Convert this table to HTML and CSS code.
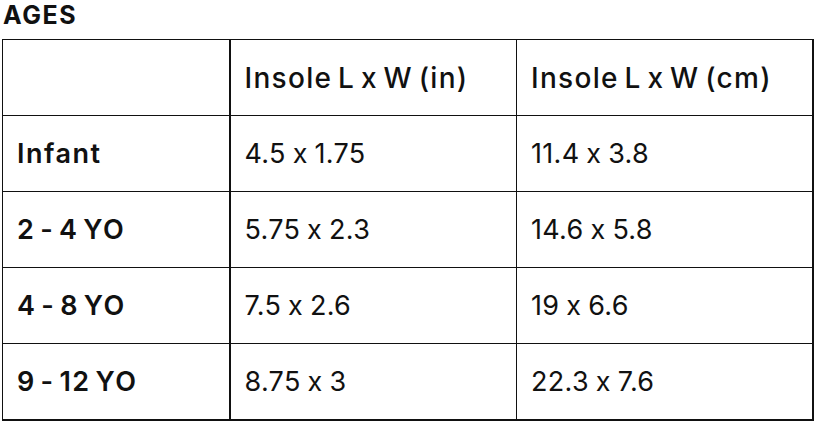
FILE: index.html
```html
<!DOCTYPE html>
<html lang="en">
<head>
<meta charset="utf-8">
<title>Ages</title>
<link rel="stylesheet" href="styles.css">
</head>
<body>
<div class="page">
  <h2 class="title">AGES</h2>
  <table class="size-table">
    <colgroup>
      <col class="c1"><col class="c2"><col class="c3">
    </colgroup>
    <thead>
      <tr><th></th><th>Insole L x W (in)</th><th>Insole L x W (cm)</th></tr>
    </thead>
    <tbody>
      <tr><th>Infant</th><td>4.5 x 1.75</td><td>11.4 x 3.8</td></tr>
      <tr><th>2 - 4 YO</th><td>5.75 x 2.3</td><td>14.6 x 5.8</td></tr>
      <tr><th>4 - 8 YO</th><td>7.5 x 2.6</td><td>19 x 6.6</td></tr>
      <tr class="last"><th>9 - 12 YO</th><td>8.75 x 3</td><td>22.3 x 7.6</td></tr>
    </tbody>
  </table>
</div>
</body>
</html>
```
FILE: styles.css
```css
html, body {
  margin: 0;
  padding: 0;
  background: #ffffff;
}
.page {
  padding: 0 3px 0 2px;
  font-family: Inter, "Liberation Sans", sans-serif;
  font-feature-settings: "calt" 0;
  color: #111111;
}
.title {
  margin: 0;
  padding: 0 0 0 1px;
  height: 39px;
  font-size: 25px;
  font-weight: 700;
  line-height: 30px;
  letter-spacing: 1.6px;
}
.size-table {
  width: 810px;
  border-collapse: collapse;
  table-layout: fixed;
}
.c1 { width: 227px; }
.c2 { width: 287px; }
.c3 { width: 296px; }
.size-table th,
.size-table td {
  height: 75px;
  padding: 0 0 0 14px;
  border-top: 1px solid #111;
  border-bottom: 1px solid #111;
  text-align: left;
  vertical-align: middle;
  font-size: 27px;
  white-space: nowrap;
}
.size-table th:first-child { border-left: 1px solid #111; border-right: 2px solid #111; }
.size-table td:last-child,
.size-table thead th:last-child { border-left: 1px solid #111; border-right: 2px solid #111; }
.size-table thead th { font-weight: 500; font-size: 28px; letter-spacing: 1.3px; word-spacing: -3px; }
.size-table tbody th { font-weight: 600; letter-spacing: 1.5px; word-spacing: -3.5px; }
.size-table td { font-weight: 400; letter-spacing: 0.3px; word-spacing: -1px; }
.size-table tr.last th,
.size-table tr.last td { border-bottom: 2px solid #111; }
```
